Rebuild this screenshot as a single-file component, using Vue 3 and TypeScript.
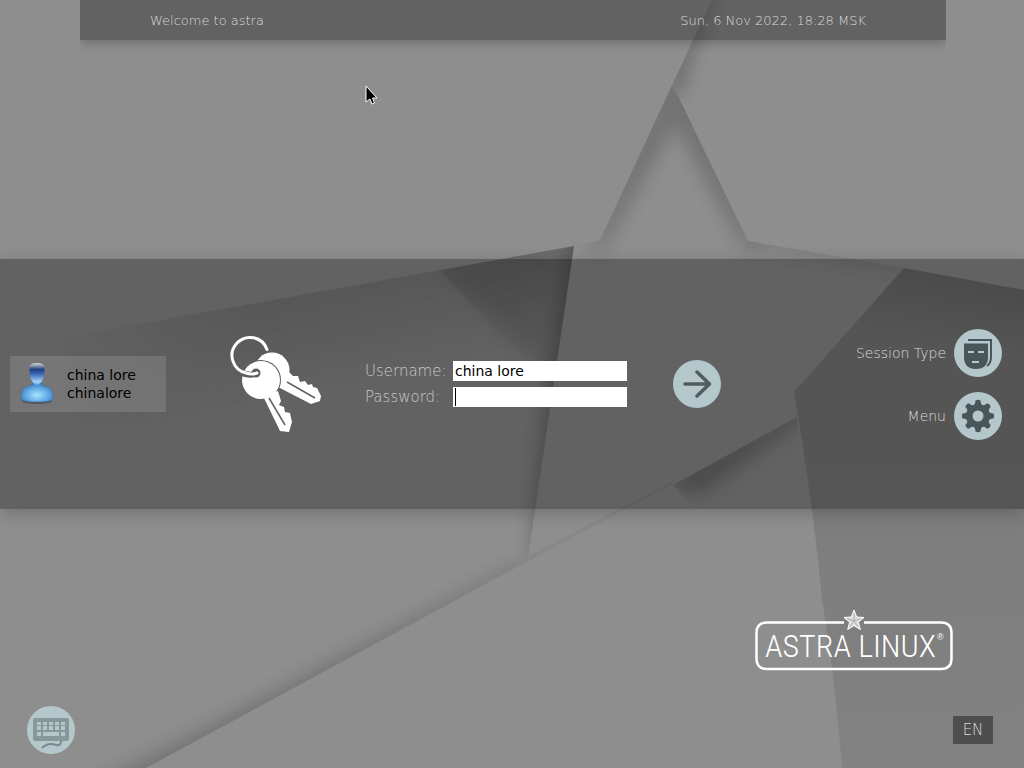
<script setup lang="ts">
import { ref } from 'vue'

interface UserEntry {
  name: string
  login: string
}

const user: UserEntry = { name: 'china lore', login: 'chinalore' }
const username = ref(user.name)
const password = ref('')
const gearAngles: number[] = [0, 45, 90, 135, 180, 225, 270, 315]
const keyColumns: number[] = [10, 16, 22, 28, 34]

function selectUser(entry: UserEntry): void {
  username.value = entry.name
  password.value = ''
}
</script>

<template>
  <main class="greeter">
    <svg class="wallpaper" viewBox="0 0 1024 768" preserveAspectRatio="xMidYMid slice" aria-hidden="true">
      <defs>
        <filter id="soft" x="-30%" y="-30%" width="160%" height="160%"><feGaussianBlur stdDeviation="9" /></filter>
        <clipPath id="peak"><path d="M712 0L672 85L682 103L780 160V0Z" /></clipPath>
        <clipPath id="inner"><path d="M672 85L600 240L574 246L600 300H904V268L748 241L680 100Z" /></clipPath>
        <clipPath id="leftWing"><path d="M0 349L574 246L527 564L0 700Z" /></clipPath>
        <clipPath id="slope"><path d="M146 768L530 560L700 470V300H0V768Z" /></clipPath>
        <clipPath id="fold"><path d="M673 485L797 417L830 640L740 560Z" /></clipPath>
        <clipPath id="ridge"><path d="M748 241L904 268L794 392H600Z" /></clipPath>
        <linearGradient id="wingShade" gradientUnits="userSpaceOnUse" x1="300" y1="295" x2="320" y2="390">
          <stop offset="0" stop-color="#000" stop-opacity=".11" />
          <stop offset="1" stop-color="#000" stop-opacity="0" />
        </linearGradient>
        <linearGradient id="wingFade" gradientUnits="userSpaceOnUse" x1="60" y1="0" x2="260" y2="0">
          <stop offset="0" stop-color="#000" />
          <stop offset="1" stop-color="#fff" />
        </linearGradient>
        <mask id="wingMask"><rect width="1024" height="768" fill="url(#wingFade)" /></mask>
        <linearGradient id="facet" gradientUnits="userSpaceOnUse" x1="500" y1="260" x2="530" y2="365">
          <stop offset="0" stop-color="#000" stop-opacity=".08" />
          <stop offset="1" stop-color="#000" stop-opacity="0" />
        </linearGradient>
        <linearGradient id="armShade" gradientUnits="userSpaceOnUse" x1="960" y1="275" x2="948" y2="345">
          <stop offset="0" stop-color="#000" stop-opacity=".12" />
          <stop offset="1" stop-color="#000" stop-opacity="0" />
        </linearGradient>
        <linearGradient id="armBase" gradientUnits="userSpaceOnUse" x1="0" y1="400" x2="0" y2="768">
          <stop offset="0" stop-color="#7b7b7b" />
          <stop offset="1" stop-color="#828282" />
        </linearGradient>
      </defs>
      <rect width="1024" height="768" fill="#8e8e8e" />
      <g clip-path="url(#peak)">
        <path d="M715 -40L665 85L678 100L722 -40Z" fill="#000" opacity=".26" filter="url(#soft)" />
      </g>
      <g clip-path="url(#inner)">
        <path d="M672 55L590 250L603 250L675 125L742 245L758 250L690 70Z" fill="#000" opacity=".19" filter="url(#soft)" />
      </g>
      <g clip-path="url(#leftWing)">
        <g mask="url(#wingMask)"><rect y="230" width="600" height="200" fill="url(#wingShade)" /></g>
        <path d="M438 266L590 230L566 400L510 335Z" fill="#000" opacity=".1" filter="url(#soft)" />
        <path d="M440 270L574 246L556 380L500 335Z" fill="url(#facet)" />
        <path d="M600 220L572 240L545 400L530 550L550 575Z" fill="#000" opacity=".24" filter="url(#soft)" />
      </g>
      <g clip-path="url(#ridge)">
        <path d="M748 230L904 258L910 270L748 245Z" fill="#000" opacity=".16" filter="url(#soft)" />
      </g>
      <path d="M904 268L1024 290V768H842Q834 670 822 600Q814 510 794 392Z" fill="url(#armBase)" />
      <path d="M904 268L1024 290V400H795L794 392Z" fill="url(#armShade)" />
      <g clip-path="url(#slope)">
        <path d="M60 850L530 566L525 560L180 741L60 800Z" fill="#000" opacity=".18" filter="url(#soft)" />
        <path d="M530 560L673 485" stroke="#000" stroke-width="8" opacity=".04" />
      </g>
      <g clip-path="url(#fold)">
        <path d="M660 485L800 408L805 418L700 494Z" fill="#000" opacity=".24" filter="url(#soft)" />
      </g>
    </svg>

    <section class="upper">
      <header class="topbar">
        <span>Welcome to astra</span>
        <time datetime="2022-11-06T18:28">Sun, 6 Nov 2022, 18:28 MSK</time>
      </header>
    </section>

    <section class="band">
      <button class="user" type="button" @click="selectUser(user)">
        <svg width="34" height="42" viewBox="0 0 34 42" aria-hidden="true">
          <defs>
            <linearGradient id="head" x1="0" y1="0" x2="0" y2="1">
              <stop offset="0" stop-color="#d4dae0" />
              <stop offset=".17" stop-color="#71809a" />
              <stop offset=".3" stop-color="#203f85" />
              <stop offset=".5" stop-color="#3a68b8" />
              <stop offset=".85" stop-color="#a5d0f4" />
              <stop offset="1" stop-color="#5aa6e8" />
            </linearGradient>
            <radialGradient id="body" cx=".5" cy=".65" r=".6">
              <stop offset="0" stop-color="#a9e2ff" />
              <stop offset=".55" stop-color="#64aee6" />
              <stop offset="1" stop-color="#3b79bb" />
            </radialGradient>
          </defs>
          <ellipse cx="17" cy="39" rx="15" ry="3" fill="#333" opacity=".5" />
          <path d="M13 20Q13 24 6 25Q1 27 1 36Q1 40 17 40Q33 40 33 36Q33 27 28 25Q21 24 21 20Z" fill="url(#body)" stroke="#3b73ad" stroke-width=".6" />
          <path d="M9.500 4Q11 1 17 1Q23 1 24.500 4Q25 13 22.500 18Q20 23 17 23Q14 23 11.500 18Q9 13 9.500 4Z" fill="url(#head)" />
        </svg>
        <span class="user-text">{{ user.name }}<br />{{ user.login }}</span>
      </button>

      <form class="login" @submit.prevent>
        <svg class="keys" width="92" height="98" viewBox="10 10 92 98" aria-hidden="true">
          <defs>
            <mask id="backCut" maskUnits="userSpaceOnUse" x="0" y="0" width="120" height="120">
              <rect width="120" height="120" fill="#fff" />
              <circle cx="41" cy="55" r="20" fill="#000" />
              <path d="M67 57L95 73" stroke="#000" stroke-width="1.500" />
            </mask>
            <mask id="frontCut" maskUnits="userSpaceOnUse" x="0" y="0" width="120" height="120">
              <rect width="120" height="120" fill="#fff" />
              <path d="M49 73L65 100" stroke="#000" stroke-width="1.500" />
              <path d="M20 47Q30 52 37 48" fill="none" stroke="#000" stroke-width="6" />
              <circle cx="36" cy="48" r="4.500" fill="#000" />
            </mask>
          </defs>
          <g fill="#fff">
            <g mask="url(#backCut)">
              <circle cx="52" cy="45" r="17.500" />
              <path d="M66 44L73 51L78 51L80 57L85 56L88 60L92 59L93 62L97 63L101 71L100 76L91 79L58 62Z" />
            </g>
            <g mask="url(#frontCut)">
              <circle cx="41" cy="55" r="19" />
              <path d="M43 71L58 66L61 76L59 80L64 82L65 87L70 88L72 97L69 107L60 106Z" />
            </g>
          </g>
          <path d="M47 24.500A18 18 0 1 0 26 48Q32 50 37 48" fill="none" stroke="#fff" stroke-width="3" stroke-linecap="round" />
        </svg>

        <div class="fields">
          <label for="username">Username:</label>
          <input id="username" v-model="username" type="text" autocomplete="username" />
          <label for="password">Password:</label>
          <input id="password" v-model="password" :class="{ empty: !password }" type="password" autocomplete="current-password" />
        </div>

        <button class="round" type="submit" aria-label="Log in">
          <svg width="48" height="48" viewBox="0 0 48 48" aria-hidden="true">
            <path d="M12 24H36M24 12L36.500 24L24 36" fill="none" stroke="#525b5e" stroke-width="3.500" stroke-linecap="round" stroke-linejoin="round" />
          </svg>
        </button>
      </form>

      <nav class="actions">
        <button class="action" type="button">
          <span>Session Type</span>
          <span class="round">
            <svg width="48" height="48" viewBox="0 0 48 48" aria-hidden="true">
              <path d="M10 14.500H34V28Q34 40 22 40Q10 40 10 28Z" fill="#48565a" />
              <path d="M14 11H37V28Q37 34 33 37" fill="none" stroke="#48565a" stroke-width="2" />
              <path d="M14 23H20M24 23H30M18 33H25" stroke="#b4c8cc" stroke-width="2" />
            </svg>
          </span>
        </button>
        <button class="action" type="button">
          <span>Menu</span>
          <span class="round">
            <svg width="48" height="48" viewBox="0 0 48 48" aria-hidden="true">
              <g fill="#48565a">
                <circle cx="24" cy="24" r="11.500" />
                <path
                  v-for="angle in gearAngles"
                  :key="angle"
                  d="M19 14L21 11.500L21.500 8.500Q24 7 26.500 8.500L27 11.500L29 14Z"
                  :transform="`rotate(${angle} 24 24)`"
                />
              </g>
              <circle cx="24" cy="24" r="5.500" fill="#b4c8cc" />
            </svg>
          </span>
        </button>
      </nav>
    </section>

    <footer class="lower">
      <svg class="logo" width="200" height="62" viewBox="0 0 200 62" role="img" aria-label="Astra Linux">
        <path d="M90 13.500H13Q2.500 13.500 2.500 24V49.500Q2.500 60 13 60H187Q197.500 60 197.500 49.500V24Q197.500 13.500 187 13.500H110" fill="none" stroke="#fff" stroke-width="2.500" />
        <path d="M100 1L102.700 8L110 8.500L104.300 13L106.300 20.500L100 16.500L93.700 20.500L95.700 13L90 8.500L97.300 8Z" fill="#ddd" stroke="#fff" stroke-width="1" />
        <path d="M100 4V12L107 9.500M100 12L104.500 18M100 12L95.500 18M100 12L93 9.500" fill="none" stroke="#a0a0a0" stroke-width=".8" />
        <text class="brand" x="11" y="48">ASTRA LINUX</text>
        <text class="mark" x="183" y="31">®</text>
      </svg>
      <div class="tools">
        <button class="round" type="button" aria-label="On-screen keyboard">
          <svg width="48" height="48" viewBox="0 0 48 48" aria-hidden="true">
            <rect x="6" y="12" width="36" height="23" rx="2" fill="#87979a" />
            <g fill="#b4c8cc">
              <rect v-for="x in keyColumns" :key="`a${x}`" :x="x" y="16" width="4" height="3" />
              <rect v-for="x in keyColumns" :key="`b${x}`" :x="x" y="20" width="4" height="4" />
              <rect x="10" y="26" width="4" height="4" />
              <rect x="16" y="26" width="16" height="4" />
              <rect x="34" y="26" width="4" height="4" />
            </g>
            <path d="M34 35Q34 40 29 39Q21 36 15 42" fill="none" stroke="#7a898c" stroke-width="2" />
          </svg>
        </button>
        <button class="lang" type="button">EN</button>
      </div>
    </footer>

    <svg class="pointer" width="14" height="20" viewBox="0 0 14 20" aria-hidden="true">
      <path d="M1 1V17L5 14L7 19L9.500 18L7.500 13H12Z" fill="#000" stroke="#fff" stroke-width="1" />
    </svg>
  </main>
</template>

<style>
body {
  margin: 0;
  background: #8e8e8e;
}
</style>

<style scoped>
.greeter {
  position: relative;
  display: grid;
  grid-template-rows: minmax(160px, 1fr) auto minmax(160px, 1fr);
  min-height: 100vh;
  overflow: hidden;
  font-family: "DejaVu Sans", Verdana, sans-serif;
  font-size: 14px;
  font-weight: 200;
  color: #dadada;
}

.wallpaper {
  position: absolute;
  inset: 0;
  width: 100%;
  height: 100%;
}

button {
  padding: 0;
  border: 0;
  background: none;
  color: inherit;
  font: inherit;
}

.upper {
  padding: 0 78px 0 80px;
}

.topbar {
  position: relative;
  display: flex;
  align-items: center;
  justify-content: space-between;
  height: 40px;
  padding: 0 80px 0 70px;
  background: rgba(0, 0, 0, 0.31);
  box-shadow: 0 4px 9px rgba(0, 0, 0, 0.2);
  clip-path: inset(0 0 -20px 0);
  font-size: 13px;
}

.band {
  position: relative;
  display: flex;
  align-items: center;
  height: 250px;
  padding: 0 22px 0 10px;
  background: rgba(0, 0, 0, 0.31);
  box-shadow: 0 4px 16px rgba(0, 0, 0, 0.2);
}

.user {
  display: flex;
  align-items: center;
  gap: 13px;
  width: 156px;
  height: 56px;
  padding: 0 10px;
  background: rgba(255, 255, 255, 0.13);
  color: #000;
  font-weight: 400;
  line-height: 18px;
  text-align: left;
}

.user svg {
  margin-bottom: 2px;
}

.login {
  display: flex;
  align-items: center;
  margin-left: 64px;
}

.fields {
  display: grid;
  grid-template-columns: 88px 174px;
  row-gap: 6px;
  align-items: center;
  margin: 0 46px 0 43px;
}

.fields label {
  color: #c8c8c8;
  font-size: 15px;
  line-height: 20px;
}

.fields input {
  box-sizing: border-box;
  width: 100%;
  height: 20px;
  padding: 0 2px;
  border: 0;
  outline: 0;
  background: #fff;
  color: #000;
  font: inherit;
  font-weight: 400;
}

.fields input.empty {
  background: linear-gradient(#000, #000) 2px 1px / 1px 18px no-repeat #fff;
}

.round {
  display: block;
  width: 48px;
  height: 48px;
  border-radius: 50%;
  background: #b4c8cc;
}

.round svg {
  display: block;
}

.actions {
  display: flex;
  flex-direction: column;
  align-items: flex-end;
  gap: 15px;
  margin-left: auto;
}

.action {
  display: flex;
  align-items: center;
  gap: 8px;
}

.lower {
  position: relative;
  display: flex;
  flex-direction: column;
  justify-content: flex-end;
  padding: 0 31px 14px 27px;
}

.logo {
  align-self: flex-end;
  margin: 0 39px 35px 0;
}

.brand {
  fill: #fff;
  font-family: "Liberation Sans Narrow", "Arial Narrow", "Roboto Condensed", sans-serif;
  font-size: 32px;
  font-weight: 300;
}

.mark {
  fill: #fff;
  font-family: "Liberation Sans", Arial, sans-serif;
  font-size: 9px;
}

.tools {
  display: flex;
  align-items: center;
  justify-content: space-between;
}

.lang {
  width: 40px;
  height: 28px;
  background: #4e4e4e;
  font-size: 15px;
}

.pointer {
  position: absolute;
  top: 85px;
  left: 365px;
}
</style>
